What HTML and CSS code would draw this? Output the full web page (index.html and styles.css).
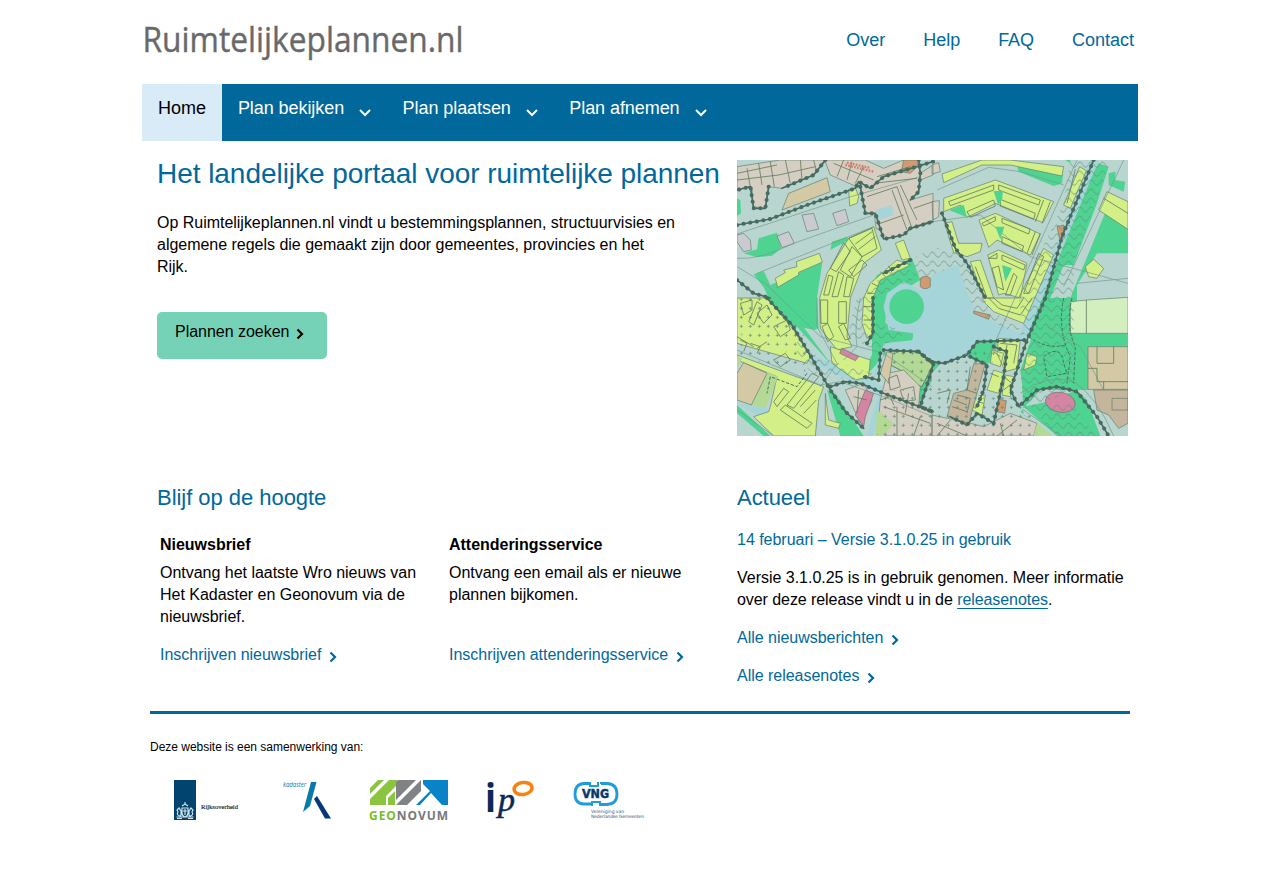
FILE: index.html
```html
<!DOCTYPE html>
<html lang="nl">
<head>
<meta charset="utf-8">
<title>Ruimtelijkeplannen.nl</title>
<link rel="stylesheet" href="styles.css">
</head>
<body>
<div class="page">
  <header class="top">
    <svg class="logo" width="330" height="52" viewBox="0 0 330 52"><text class="logo-text" x="0.500" y="33" textLength="321" lengthAdjust="spacingAndGlyphs">Ruimtelijkeplannen.nl</text></svg>
    <nav class="links"><a>Over</a><a>Help</a><a>FAQ</a><a>Contact</a></nav>
  </header>
  <nav class="bar">
    <a class="item active">Home</a>
    <a class="item">Plan bekijken<svg class="down" viewBox="0 0 12 8"><path d="M1 1l5 5 5-5"/></svg></a>
    <a class="item">Plan plaatsen<svg class="down" viewBox="0 0 12 8"><path d="M1 1l5 5 5-5"/></svg></a>
    <a class="item">Plan afnemen<svg class="down" viewBox="0 0 12 8"><path d="M1 1l5 5 5-5"/></svg></a>
  </nav>
  <section class="hero">
    <div class="intro">
      <h1>Het landelijke portaal voor ruimtelijke plannen</h1>
      <p>Op Ruimtelijkeplannen.nl vindt u bestemmingsplannen, structuurvisies en algemene regels die gemaakt zijn door gemeentes, provincies en het Rijk.</p>
      <a class="button">Plannen zoeken<svg class="next" viewBox="0 0 8 12"><path d="M1.5 1.5L6 6l-4.500 4.500"/></svg></a>
    </div>
    <svg class="map" viewBox="0 0 1173 828">
      <defs>
        <pattern id="wave" width="34" height="27" patternUnits="userSpaceOnUse"><path class="pat" d="M0 14q8-16 17 0t17 0"/></pattern>
        <pattern id="plus" width="27" height="27" patternUnits="userSpaceOnUse"><path class="pat" d="M8 13h10M13 8v10"/></pattern>
      </defs>
      <rect class="base" width="1173" height="828"/>
      <g class="green">
        <path d="M65 235L120 218 133 265 105 287 60 292 20 280 60 268zM0 115L10 120 12 160 0 168zM50 343L80 333 100 375 256 307 240 414 245 505 232 510 160 495 95 414 80 382zM280 270L285 245 330 230 335 240z"/>
        <path d="M385 414L420 345 525 295 550 360 500 390 450 414 445 490 520 510 530 520 525 545 460 560 440 590 380 655 375 640 405 585 405 500z"/>
        <path d="M840 15L978 45 975 70 950 78 845 35zM1085 10L1115 20 1080 130 1010 315 980 315 940 414 925 480 890 540 870 530 1000 150zM1108 150L1173 208 1173 280 1080 280 1020 375 1020 520 1173 520 1173 560 1055 560 1055 690 1000 690 910 690 850 755 940 828 860 765 855 670 850 630 885 530 930 414 1000 414 1030 340z"/>
        <path d="M1115 40L1135 35 1135 60 1165 65 1160 95 1115 75zM985 0h15v10zM690 570L720 545 780 540 775 600 745 615 690 590zM585 600L625 610 615 640 585 635zM545 590L585 600V660L550 735 540 710zM90 414L130 414 210 515 280 610 270 600 180 500zM860 740L930 725 1020 690 1050 720 1090 828H960zM0 735L100 828H80L0 760zM270 690L295 700 380 828H310z"/>
      </g>
      <path class="water" d="M585 345L660 315 715 460 870 530 860 538 780 535 715 548 690 590 620 610 545 575 440 575 430 640 405 660 440 550 530 540 528 520 455 510 440 440 450 400 500 365 550 390z"/>
      <path class="water" d="M1060 0h25L865 540 840 540zM0 485L240 590 440 680 430 705 210 600 0 510zM405 660L440 700 410 828H390L425 700zM0 730L90 745 95 760 60 765z"/>
      <circle class="green" cx="509" cy="440" r="52"/>
      <g class="yellow edge">
        <path d="M115 355L145 338 140 330 180 320 178 305 247 280 256 306 185 337 185 345 122 382zM335 88L355 83 365 110 360 130 338 138zM475 250L500 240 520 295 495 300zM335 235L410 200 433 270 380 310 340 414 330 530 345 560 300 570 250 505 248 414 270 340zM380 414L400 370 480 300 520 315 430 360 405 420 405 520 390 535 375 490z"/>
        <path d="M615 42L735 0H820L980 20 975 48 820 15 735 15 620 68zM620 115L775 60 950 125 918 188 775 130 690 172 670 135 620 155zM726 180L775 160 910 222 880 285 780 240 755 262zM752 285L785 270 870 310 850 414 800 400 785 405zM623 190L645 185 665 250 735 250 730 275 690 290 650 278zM700 305L730 300 770 414H740zM920 265L950 285 860 490 770 455 745 430 735 414 845 414zM1028 20L1048 32 1000 145 980 135zM1110 95L1173 125V208L1085 150zM1045 320L1070 298 1100 325 1080 355 1055 350z"/>
        <path d="M0 414H90L170 510 220 590 210 610 0 550zM0 585L260 680 245 720 235 828H110L50 770 95 755 100 740 120 650 0 600zM265 700L275 780 310 790 305 805 265 795zM280 560L400 600 395 650 355 660 285 610zM785 535L850 540 840 625 805 635 780 580zM765 570L800 580 790 620 760 610zM770 630L800 640 785 700 750 690zM805 645L830 650 820 710 795 705zM720 708L745 705 735 765 705 750zM870 580L900 590 895 615 860 630z"/>
        <path d="M460 574H540L590 610 555 680 515 665 510 640 460 615z" class="olive"/><path d="M460 574H540L590 610 555 680 515 665 510 640 460 615z" fill="url(#plus)"/>
      </g>
      <g class="stone edge">
        <path d="M0 20L130 0H385L440 25 500 0H540L550 40 588 15V45L550 60 545 95 520 120 588 100V180L520 205 500 225 440 237 430 210 417 205 412 160H385L370 85 280 45 265 5 230 45 135 85 95 80 85 145 48 140 45 80 0 88zM585 15L605 8 610 35 585 42zM585 125L607 122 605 170 588 180z"/>
        <path d="M450 640L500 630 550 680 545 735 585 760V828H420L430 720zM325 690L380 670 405 720 370 790zM585 765L700 790 740 800 820 760 900 790 890 828H585z"/>
      </g>
      <path class="water" d="M417 150L465 135 470 165 425 180z"/>
      <path class="base" d="M585 640L620 600 700 610 745 615 745 650 720 720 680 780 650 770 600 760 585 740z"/>
      <path class="olive" d="M88 635L123 650 85 745 43 735zM0 590L15 595 0 630zM420 750L470 790 440 828H415zM900 790L950 828H890z"/>
      <g class="tan edge"><path d="M135 150L155 100 270 53 280 95zM20 608L90 640 43 735 0 720V640zM1053 560H1173V688H1053zM430 640L450 575 468 580 455 670z"/></g>
      <g class="brown edge"><path d="M710 612L745 610 720 700 695 790 630 770 650 700 690 690zM1070 690H1173V790L1145 805 1115 765 1080 750zM1125 715H1173V750H1125z"/></g>
      <path class="lime edge" d="M1000 425L1050 420 1173 412V520H1000z"/>
      <g class="grey edge"><path d="M0 225L20 220 40 240 43 270 20 275 0 245zM120 228L155 215 172 250 135 263zM195 165L230 160 245 207 210 215zM287 160L325 148 335 185 300 197z"/></g>
      <path class="orange edge" d="M500 0H545L540 20 520 40 493 35zM550 355q15-12 30 0v25q-15 12-30 0zM710 453L760 465 755 478 710 460zM785 718L808 722 803 760 780 755zM960 200L980 195 982 230 968 237z"/>
      <g class="pink edge"><path d="M315 565L365 590 355 602 308 580zM385 690L410 700 385 770 380 800 355 765z"/><ellipse cx="970" cy="727" rx="45" ry="30" transform="rotate(10 970 727)"/></g>
      <g fill="url(#wave)"><path d="M525 300L588 260 680 285 760 450 870 520 850 525 715 460 660 315 585 345 550 360zM1000 0H1120L1010 315 1010 690 860 750 850 630 890 520 865 525 845 414 980 130zM405 420L415 490 520 515 415 570 330 530 360 414 480 310 550 350 450 395zM180 510L240 590 410 640 390 660 240 650 180 600zM880 740L1000 725 1080 828H960z"/></g>
      <path fill="url(#plus)" d="M0 414H100L200 520 210 600 0 520zM430 690L550 690 585 610 780 550 740 720 820 700 900 790V828H420zM0 550L210 610 230 640 0 590z"/>
      <g class="road-line">
        <path d="M0 222L335 112 550 50M0 295Q70 300 170 250L410 165M60 340L410 200M0 320L90 375 250 530 440 580 585 680M0 570L250 675 310 665 440 710 588 770M240 414V500L300 610 250 680M370 414Q350 500 360 560L320 600M600 90L755 22 850 35 980 75M588 185L730 165 880 290 1173 370M930 500L1030 560 1100 690M1173 355L1020 370M850 700Q930 640 1010 665Q1080 710 1130 828M860 750L970 828M0 750L110 828M1020 0L750 600M1160 0L980 380"/>
        <path class="dash" d="M980 414Q960 510 1000 590L990 670M1005 414Q985 500 1015 560L1010 670M920 590Q970 550 980 610L990 640 930 650zM875 530Q930 570 985 555M210 640L180 680 100 650 90 700"/>
      </g>
      <g class="lots">
        <path d="M335 235L405 205 420 265 375 290zM355 252L405 215M365 268L415 230M345 260L375 290 340 350 310 330zM320 248L280 325 298 335 340 275zM335 330L375 300 390 315 350 350zM275 345L260 405H275L288 350zM305 335L285 410H302L320 345zM330 350L320 410H337L350 355zM250 420H272V490H252zM305 425H328V490H305zM255 500L272 490 290 530 272 545zM305 500L320 490 340 535 325 540zM430 335L445 350M455 317L465 338M405 370L425 380M390 400H410M380 440H405M380 480H405"/>
        <path d="M635 125L770 75 770 90 640 137zM785 75L910 120 905 135 785 90zM690 155L770 120 775 138 700 172zM790 118L895 160 890 178 790 138zM920 120L895 185M940 125L915 190M735 190L775 170V182L740 198zM795 175L880 207 875 222 795 188zM795 230L860 258 855 275 795 250zM895 215L870 280M910 220L885 285M755 295L780 280V295zM795 285L865 315 860 330 795 300zM765 325L785 318 800 390 780 380zM830 340L805 405H820L840 350zM905 280L860 400H875L920 290zM1015 28L990 130M1100 115L1173 160M755 414L785 445 850 465 885 414M770 414L795 435 840 445 860 414M715 320L750 414"/>
        <path d="M110 725L140 685 155 695 120 740zM150 735L225 640 245 650 170 745zM130 750L145 735 225 790 210 805zM190 740L235 690M200 760L238 720M60 460L90 435 105 465 80 490zM110 500L150 480 160 510 130 530zM35 485L60 425 75 435 50 495zM10 430L45 420 45 450 20 465zM0 530L50 560M60 565L90 545M110 600L145 580 160 600 130 620zM10 540L30 550 20 575M40 550L70 560 60 580M0 40L120 15M30 25L40 80M65 10L75 75M100 5L112 80M145 0L160 70M190 0L195 60M230 0L240 40M0 60L125 45 235 20M290 10L410 60M320 0L300 50M345 5L330 60M380 20L355 70M420 50L520 20M410 70L540 55M390 110L480 80 525 205M465 90L510 210M490 75L540 180M430 190L500 165M530 145L588 125M440 740L580 790M480 740V828M515 700L505 760M550 770L530 828M350 710L390 720M365 690L360 760M600 700L640 690 630 730M650 720L690 735M600 790L690 828M640 780L600 828M790 790L800 828M840 780L780 828M1080 560V610H1130V560M1053 625H1080V665H1173M1100 665V688"/>
        <path d="M1048 420V520M790 550L840 555 830 610M810 555L800 610M770 575L790 590M760 640L785 650M800 650L825 670 800 690M720 725L740 730M455 655L480 645 490 680 460 690zM490 690L530 680 535 720 500 725zM430 720L460 710 470 735M700 620L690 690 720 700M660 705L700 715 690 760M645 740L690 755"/>
      </g>
      <g class="heavy"><path id="bounds" d="M0 195L100 177 210 135 355 85 365 65 400 85 440 50 588 5M0 360L50 400 100 414M90 414L165 495 225 595 280 690 325 755 380 805M280 680L325 665 370 670 440 700 588 755M615 160L655 265 690 310 745 414M1070 0L975 230 925 414 870 540 820 690 845 740 900 690 960 680 1020 695 1080 770 1115 828M440 570L545 575 585 610M430 580L425 660 380 650M585 605L620 610 690 585 720 545 870 540M545 575L590 610 550 740 585 755M770 560L810 575 800 650 770 790 720 760 690 795 640 770M700 590L750 615 740 690 720 740M370 80L385 160 415 160 440 237 500 225 520 205 588 185M545 0L550 40 545 95 520 120M265 0L230 45 135 85M95 80L85 145 50 145 40 80 0 90M408 414V520L390 550M520 300L440 340"/><use class="dots" href="#bounds"/></g>
      <g class="marks"><path d="M325 15L410 35M330 8L400 24"/></g>
      <path class="green" d="M770 93L798 93 795 120 783 135zM636 150L680 135 690 172zM775 200H802L790 238zM795 315L825 325 805 365z"/>
    </svg>
  </section>
  <section class="lower">
    <div class="stay">
      <h2>Blijf op de hoogte</h2>
      <div class="cols">
        <div class="col"><h3>Nieuwsbrief</h3><p>Ontvang het laatste Wro nieuws van Het Kadaster en Geonovum via de nieuwsbrief.</p><a class="more">Inschrijven nieuwsbrief<svg class="next" viewBox="0 0 8 12"><path d="M1.500 1.500L6 6l-4.500 4.500"/></svg></a></div>
        <div class="col"><h3>Attenderingsservice</h3><p>Ontvang een email als er nieuwe plannen bijkomen.</p><a class="more">Inschrijven attenderingsservice<svg class="next" viewBox="0 0 8 12"><path d="M1.500 1.500L6 6l-4.500 4.500"/></svg></a></div>
      </div>
    </div>
    <div class="news">
      <h2>Actueel</h2>
      <a class="more">14 februari – Versie 3.1.0.25 in gebruik</a>
      <p>Versie 3.1.0.25 is in gebruik genomen. Meer informatie <span class="tight">over deze release vindt u in de <a class="inline">releasenotes</a>.</span></p>
      <a class="more">Alle nieuwsberichten<svg class="next" viewBox="0 0 8 12"><path d="M1.500 1.500L6 6l-4.500 4.500"/></svg></a>
      <a class="more">Alle releasenotes<svg class="next" viewBox="0 0 8 12"><path d="M1.500 1.500L6 6l-4.500 4.500"/></svg></a>
    </div>
  </section>
  <footer>
    <p>Deze website is een samenwerking van:</p>
    <div class="partners">
      <svg class="rijk" width="66" height="40" viewBox="0 0 66 40"><path fill="#01446f" d="M0 0h22v40H0z"/><g fill="none" stroke="#d5e2eb" stroke-width="1.200"><path d="M8 28h6v5q0 3-3 4-3-1-3-4zM8 26l3-2 3 2M11 22v3M2.500 37h17M6 36q-4-1-2-4l-1-2 2-2 2 3v4l-1 2M16 36q4-1 2-4l1-2-2-2-2 3v4l1 2M9 31h4M11 29v6M3 38.500h5M14 38.500h5"/></g><text class="rijk-text" x="27" y="29" textLength="37" lengthAdjust="spacingAndGlyphs">Rijksoverheid</text></svg>
      <svg class="kad" width="50" height="40" viewBox="0 0 50 40"><text class="kad-text" x="1" y="7" textLength="23" lengthAdjust="spacingAndGlyphs">kadaster</text><path fill="#0879ab" d="M29 2h5.500L28 26l-7 6z"/><path fill="#07377b" d="M32 19l3-3 14 22.500h-6z"/></svg>
      <svg class="geo" width="80" height="40" viewBox="0 0 80 40"><path fill="#8bc53f" d="M1 8L9 0h6L1 14zM1 19L20 0h8v5L17 16v9H1zM19 18l7-7v14h-7z"/><path fill="#808285" d="M29 0h18L27 20V2zM52 0v11L38 25H27z"/><path fill="#0983c7" d="M54 0h25v25h-6L62 13 51 25h-4l14-14-7-7z"/><text class="geo-text" x="0" y="39.500" textLength="79" lengthAdjust="spacing"><tspan fill="#78be20">GEO</tspan>NOVUM</text></svg>
      <svg class="ipo" width="50" height="40" viewBox="0 0 50 40"><text class="i-text" x="-1" y="32" textLength="11" lengthAdjust="spacingAndGlyphs">i</text><text class="p-text" x="12" y="31">p</text><ellipse cx="37" cy="8.500" rx="9" ry="6" fill="none" stroke="#f58212" stroke-width="3.500" transform="rotate(-8 37 8)"/></svg>
      <svg class="vng" width="74" height="40" viewBox="0 0 74 40"><path fill="none" stroke="#209bdb" stroke-width="2.800" d="M17 3.500H11Q2 4 2 14t9 10h7M27 24.500H34Q44 24 44 14T34 3.500H28"/><path fill="none" stroke="#209bdb" stroke-width="2" d="M17 2v4h8V2M19 26v-4h8v4M17 3h-2M27 3h4"/><text class="vng-text" x="9" y="18" textLength="27" lengthAdjust="spacingAndGlyphs">VNG</text><g class="vng-small"><text x="18" y="32.500" textLength="33">Vereniging van</text><text x="18" y="37.500" textLength="53">Nederlandse Gemeenten</text></g></svg>
    </div>
  </footer>
</div>
</body>
</html>
```
FILE: styles.css
```css
* { box-sizing: border-box; }
body { margin: 0; background: #fff; color: #000; font: 16px/22px "Liberation Sans", Arial, sans-serif; letter-spacing: -.02px; }
h1, h2, h3, p { margin: 0; }
h1, h2 { color: #01689b; font-weight: 400; }
svg { overflow: visible; }
.page { width: 996px; margin: 0 auto; }
.top { height: 84px; display: flex; justify-content: space-between; padding: 19px 4px 0 0; }
.logo-text { font: 34px "Open Sans", sans-serif; fill: #696969; stroke: #696969; stroke-width: .4; letter-spacing: 0; }
.links { display: flex; gap: 38px; padding-top: 10px; font-size: 18px; color: #01689b; }
.bar { height: 57px; display: flex; background: #01689b; color: #fff; font-size: 18px; }
.item { padding: 13px 16px 0; }
.active { background: #d9ebf7; color: #000; }
.down { width: 12px; height: 8px; margin-left: 15px; vertical-align: -3px; fill: none; stroke: #fff; stroke-width: 2; }
.item:not(.active) { padding-right: 15.500px; letter-spacing: -.07px; }
.hero { height: 335px; display: flex; padding: 19px 10px 0 15px; justify-content: space-between; }
.intro { width: 570px; }
h1 { font-size: 28px; line-height: 28px; white-space: nowrap; letter-spacing: -.045px; }
.intro p { width: 522px; margin-top: 24px; }
.button { display: block; width: 170px; height: 47px; margin-top: 34px; padding: 9px 18px; border-radius: 5px; background: #76d2b6; }
.button .next { margin-left: 7px; }
.next { width: 8px; height: 12px; margin-left: 8px; vertical-align: -3px; fill: none; stroke: currentColor; stroke-width: 2.200; }
.map { width: 391px; height: 276px; overflow: hidden; }
.base { fill: #b9d5cf; }
.green { fill: #4fd391; }
.water { fill: #a5d5d9; }
.yellow { fill: #d3ef87; }
.stone { fill: #d5cfc3; }
.olive { fill: #b3d995; }
.tan { fill: #d3c9a5; }
.brown { fill: #c3b69c; }
.lime { fill: #d3efc0; }
.grey { fill: #cacbd1; }
.orange { fill: #d39a70; }
.pink { fill: #d584a2; }
.edge { stroke: #617b6c; stroke-width: 2; }
.pat { fill: none; stroke: #5f8c7e; stroke-width: 2; }
.road-line { fill: none; stroke: #71988b; stroke-width: 2; }
.dash { stroke: #467361; stroke-width: 3; stroke-dasharray: 10 5; }
.lots { fill: none; stroke: #637d5e; stroke-width: 2.500; }
.heavy { fill: none; stroke: #486b60; stroke-width: 5; stroke-linejoin: round; stroke-linecap: round; }
.dots { stroke-width: 12; stroke-dasharray: .1 20; }
.marks { stroke: #d7776d; stroke-width: 7; stroke-dasharray: 5 4; }
.lower { height: 235px; display: flex; padding: 9px 0 0 15px; }
.stay { width: 580px; }
h2 { font-size: 22px; line-height: 26px; letter-spacing: -.04px; }
.cols { display: flex; padding: 23px 0 0 3px; gap: 29px; }
.col { width: 260px; }
.col h3 { font-size: 16px; line-height: 22px; margin-bottom: 6px; }
.col p { height: 66px; margin-bottom: 16px; }
.more { display: block; color: #01689b; white-space: nowrap; }
.news { width: 395px; }
.news h2 { margin-bottom: 18px; }
.news p { margin: 16px 0; }
.news .more + .more { margin-top: 16px; }
.tight { letter-spacing: -.07px; }
.inline { color: #01689b; text-decoration: underline; text-underline-offset: 3px; }
footer { margin: 0 8px; border-top: 3px solid #01689b; padding-top: 25px; font-size: 12px; line-height: 16px; }
.partners { display: flex; padding: 25px 0 0 24px; }
.kad { margin-left: 42px; }
.geo { margin-left: 37px; }
.ipo { margin-left: 37px; }
.vng { margin-left: 37px; }
.rijk-text { font: 7px "Liberation Serif", serif; fill: #222; stroke: #222; stroke-width: .15; }
.kad-text { font: italic 7px "Open Sans", sans-serif; fill: #0879ab; }
.geo-text { font: bold 12px "Open Sans", sans-serif; fill: #77787b; letter-spacing: 0; }
.i-text { font: bold 40px "Open Sans", sans-serif; fill: #0b2858; }
.p-text { font: italic 34px "Liberation Serif", serif; fill: #0b2858; stroke: #0b2858; stroke-width: .5; }
.vng-text { font: bold 12px "DejaVu Sans", sans-serif; fill: #07386d; stroke: #07386d; stroke-width: .5; }
.vng-small { font: 4.500px "DejaVu Sans", sans-serif; fill: #335b83; }
```
